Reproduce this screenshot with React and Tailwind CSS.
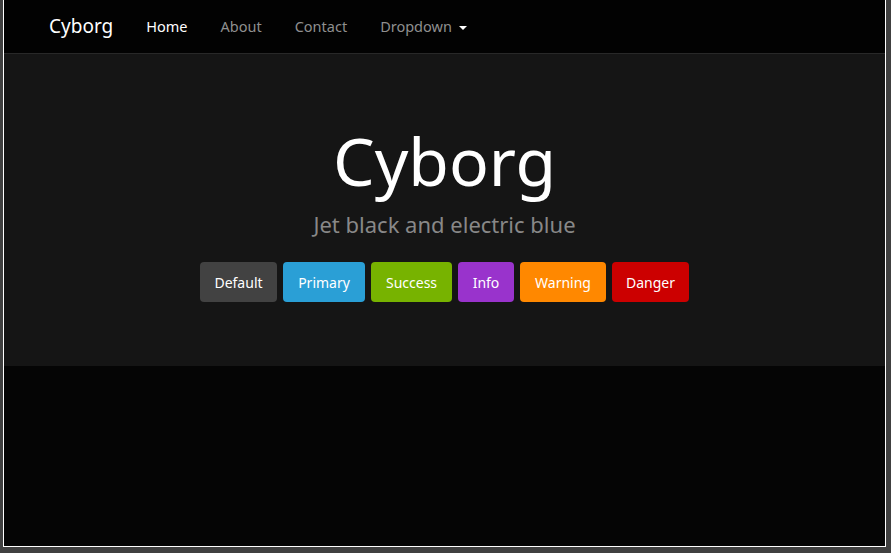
import React from 'react';

const links = [
  { label: 'Home', active: true },
  { label: 'About' },
  { label: 'Contact' },
];

const buttons = [
  { label: 'Default', cls: 'bg-[#424242] w-[77px]' },
  { label: 'Primary', cls: 'bg-[#2a9fd6] w-[82px]' },
  { label: 'Success', cls: 'bg-[#77b300] w-[81px]' },
  { label: 'Info', cls: 'bg-[#9933cc] w-[56px]' },
  { label: 'Warning', cls: 'bg-[#ff8800] w-[86px]' },
  { label: 'Danger', cls: 'bg-[#cc0000] w-[77px]' },
];

const App = () => {
  return (
    <div className="w-[891px] h-[553px] bg-[#404040] overflow-hidden" style={{ fontFamily: '"Noto Sans", "Open Sans", sans-serif' }}>
      <div className="ml-[3px] w-[883px] h-[547px] border-x border-b border-white bg-[#050505] flex flex-col">
        <nav className="h-[54px] shrink-0 bg-[#020202] border-b border-[#282828] flex items-center pl-[45px]">
          <span className="text-[19px] text-white pr-[16.5px] leading-none">Cyborg</span>
          {links.map((l) => (
            <a
              key={l.label}
              href="#"
              className={`px-[16.5px] text-[14.5px] leading-none ${l.active ? 'text-white' : 'text-[#8f8f8f]'}`}
            >
              {l.label}
            </a>
          ))}
          <a href="#" className="px-[16.5px] text-[14.5px] leading-none text-[#8f8f8f] flex items-center gap-[7px]">
            Dropdown
            <span className="w-0 h-0 border-x-[4px] border-x-transparent border-t-[4px] border-t-white mt-[2px]" />
          </a>
        </nav>
        <section className="h-[312px] shrink-0 bg-[#151515] flex flex-col items-center pt-[73px]">
          <h1 className="text-[66px] leading-[66px] text-white">Cyborg</h1>
          <p className="mt-[20px] text-[22px] leading-[22px] text-[#888888]">Jet black and electric blue</p>
          <div className="mt-[27px] flex gap-[6px]">
            {buttons.map((b) => (
              <button
                key={b.label}
                className={`${b.cls} h-[40px] rounded-[4px] text-[14px] text-white flex items-center justify-center`}
              >
                {b.label}
              </button>
            ))}
          </div>
        </section>
        <div className="flex-1" />
      </div>
    </div>
  );
};

export default App;
